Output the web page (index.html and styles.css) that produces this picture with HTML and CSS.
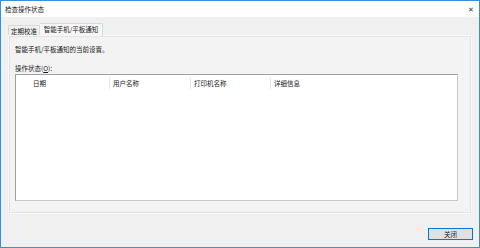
FILE: index.html
```html
<!doctype html>
<html>
<head>
    <meta charset="utf-8">
    <title>检查操作状态</title>
    <link rel="stylesheet" href="styles.css">
</head>
<body>
    <div class="window">
        <div class="titlebar">
            <span class="title">检查操作状态</span>
            <span class="close">&#x2715;</span>
        </div>

        <div class="client">
            <div class="tabs">
                <div class="tab">定期校准</div>
                <div class="tab active">智能手机/平板通知</div>
            </div>

            <div class="panel">
                <div class="desc">智能手机/平板通知的当前设置。</div>
                <div class="label">操作状态(<u>O</u>):</div>

                <div class="listview">
                    <div class="list-header">
                        <div class="col col-date">日期</div>
                        <div class="col col-user">用户名称</div>
                        <div class="col col-printer">打印机名称</div>
                        <div class="col col-detail">详细信息</div>
                    </div>
                </div>
            </div>

            <div class="actions">
                <button class="btn" type="button">关闭</button>
            </div>
        </div>
    </div>
</body>
</html>
```

FILE: styles.css
```css
* {
    box-sizing: border-box;
}

body {
    margin: 0;
    font-family: "Noto Sans CJK SC", "Noto Sans", sans-serif;
    font-size: 6.5px;
    color: #1a1a1a;
}

.window {
    width: 480px;
    height: 248px;
    border: 1px solid #3a8fd9;
    display: flex;
    flex-direction: column;
    background: #f0f0f0;
}

.titlebar {
    height: 16px;
    background: #fff;
    display: flex;
    align-items: center;
    justify-content: space-between;
    padding: 0 5px 1px 4px;
}

.titlebar .close {
    font-size: 7px;
    color: #333;
}

.client {
    flex: 1;
    display: flex;
    flex-direction: column;
    padding: 6px 6px 6px 7px;
}

.tabs {
    display: flex;
    align-items: flex-end;
    height: 12px;
    position: relative;
    z-index: 1;
}

.tab {
    height: 10px;
    width: 32px;
    border: 1px solid #d9d9d9;
    border-bottom: none;
    background: #f0f0f0;
    display: flex;
    align-items: center;
    justify-content: center;
    line-height: 1;
    padding-top: 1px;
}

.tab.active {
    height: 13px;
    width: 63px;
    margin-bottom: -1px;
    background: #f7f7f7;
    border-left: none;
    padding-bottom: 2px;
}

.panel {
    width: 464px;
    height: 179px;
    border: 1px solid #fafafa;
    outline: 1px solid #e3e3e3;
    outline-offset: -2px;
    background: #f3f3f3;
    padding: 8px 13px 0 6px;
}

.desc {
    height: 10px;
    line-height: 10px;
}

.label {
    margin-top: 9px;
    height: 10px;
    line-height: 10px;
}

.label u {
    text-underline-offset: 1px;
}

.listview {
    margin-top: 1px;
    height: 127px;
    border: 1px solid #a0a0a0;
    border-right-color: #c8c8c8;
    border-bottom-color: #c8c8c8;
    background: #fff;
}

.list-header {
    display: flex;
    height: 14px;
    padding-top: 2px;
}

.col {
    line-height: 12px;
    border-right: 1px solid #e5e5e5;
    padding-left: 3px;
}

.col-date {
    width: 94px;
    padding-left: 17px;
}

.col-user {
    width: 81px;
}

.col-printer {
    width: 80px;
}

.col-detail {
    flex: 1;
    border-right: none;
}

.actions {
    flex: 1;
    display: flex;
    justify-content: flex-end;
    align-items: flex-end;
    padding-bottom: 1px;
}

.btn {
    width: 45px;
    height: 12px;
    border: 1px solid #0078d7;
    background: #e1e1e1;
    font-family: inherit;
    font-size: 6.5px;
    color: #1a1a1a;
    padding: 0;
    line-height: 1;
}
```
